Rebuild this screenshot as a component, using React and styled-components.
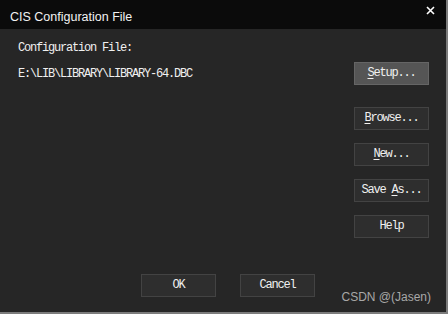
import styled, { createGlobalStyle } from "styled-components";

const GlobalStyle = createGlobalStyle`
  html, body {
    margin: 0;
    padding: 0;
    background: #262626;
  }
  * {
    box-sizing: border-box;
  }
`;

const App = () => {
  return (
    <>
      <GlobalStyle />
      <Window>
        <TitleBar>
          <Title>CIS Configuration File</Title>
          <CloseButton>
            <svg width="9" height="9" viewBox="0 0 9 9">
              <path d="M1 1 L8 8 M8 1 L1 8" stroke="#ffffff" strokeWidth="1.6" />
            </svg>
          </CloseButton>
        </TitleBar>
        <Body>
          <Label>Configuration File:</Label>
          <PathRow>
            <PathText>E:\LIB\LIBRARY\LIBRARY-64.DBC</PathText>
            <Button $active>
              <Key>S</Key>etup...
            </Button>
          </PathRow>
          <ButtonColumn>
            <Button>
              <Key>B</Key>rowse...
            </Button>
            <Button>
              <Key>N</Key>ew...
            </Button>
            <Button>
              Save <Key>A</Key>s...
            </Button>
            <Button>Help</Button>
          </ButtonColumn>
          <Footer>
            <Button>OK</Button>
            <Button>Cancel</Button>
          </Footer>
          <Watermark>CSDN @(Jasen)</Watermark>
        </Body>
      </Window>
    </>
  );
};

const Window = styled.div`
  width: 448px;
  height: 314px;
  display: flex;
  flex-direction: column;
  border-right: 2px solid #7c7c7c;
  border-bottom: 2px solid #7c7c7c;
  background: #262626;
`;

const TitleBar = styled.div`
  height: 29px;
  flex-shrink: 0;
  display: flex;
  align-items: center;
  justify-content: space-between;
  background: #0b0b0b;
  padding: 0 0 0 10px;
`;

const Title = styled.div`
  font-family: "Liberation Sans", Arial, sans-serif;
  font-size: 12.5px;
  color: #f2f2f2;
  margin-top: 4px;
`;

const CloseButton = styled.div`
  width: 30px;
  height: 29px;
  display: flex;
  align-items: flex-start;
  justify-content: center;
  padding-top: 6px;
  margin-right: 1px;
`;

const Body = styled.div`
  position: relative;
  flex: 1;
  display: flex;
  flex-direction: column;
  padding: 13px 17px 0 18px;
  font-family: "Liberation Mono", "Courier New", monospace;
  font-size: 12px;
  letter-spacing: -1.2px;
  color: #f0f0f0;
`;

const Label = styled.div`
  height: 12px;
  line-height: 12px;
`;

const PathRow = styled.div`
  display: flex;
  align-items: center;
  justify-content: space-between;
  margin-top: 8px;
`;

const PathText = styled.div`
  line-height: 12px;
  margin-top: 1px;
`;

const ButtonColumn = styled.div`
  align-self: flex-end;
  display: flex;
  flex-direction: column;
  gap: 13px;
  margin-top: 22px;
`;

const Button = styled.div`
  width: 75px;
  height: 23px;
  display: flex;
  align-items: center;
  justify-content: center;
  background: ${(props) => (props.$active ? "#555555" : "#2e2e2e")};
  border: 1px solid ${(props) => (props.$active ? "#656565" : "#434343")};
  color: #f0f0f0;
  white-space: pre;
  padding-bottom: 1px;
`;

const Key = styled.span`
  text-decoration: underline;
  text-underline-offset: 2px;
`;

const Footer = styled.div`
  display: flex;
  gap: 24px;
  margin-top: 36px;
  padding-left: 123px;
`;

const Watermark = styled.div`
  position: absolute;
  right: 15px;
  bottom: 8px;
  font-family: "Liberation Sans", Arial, sans-serif;
  font-size: 12px;
  letter-spacing: 0;
  color: #a8a8a8;
`;

export default App;
